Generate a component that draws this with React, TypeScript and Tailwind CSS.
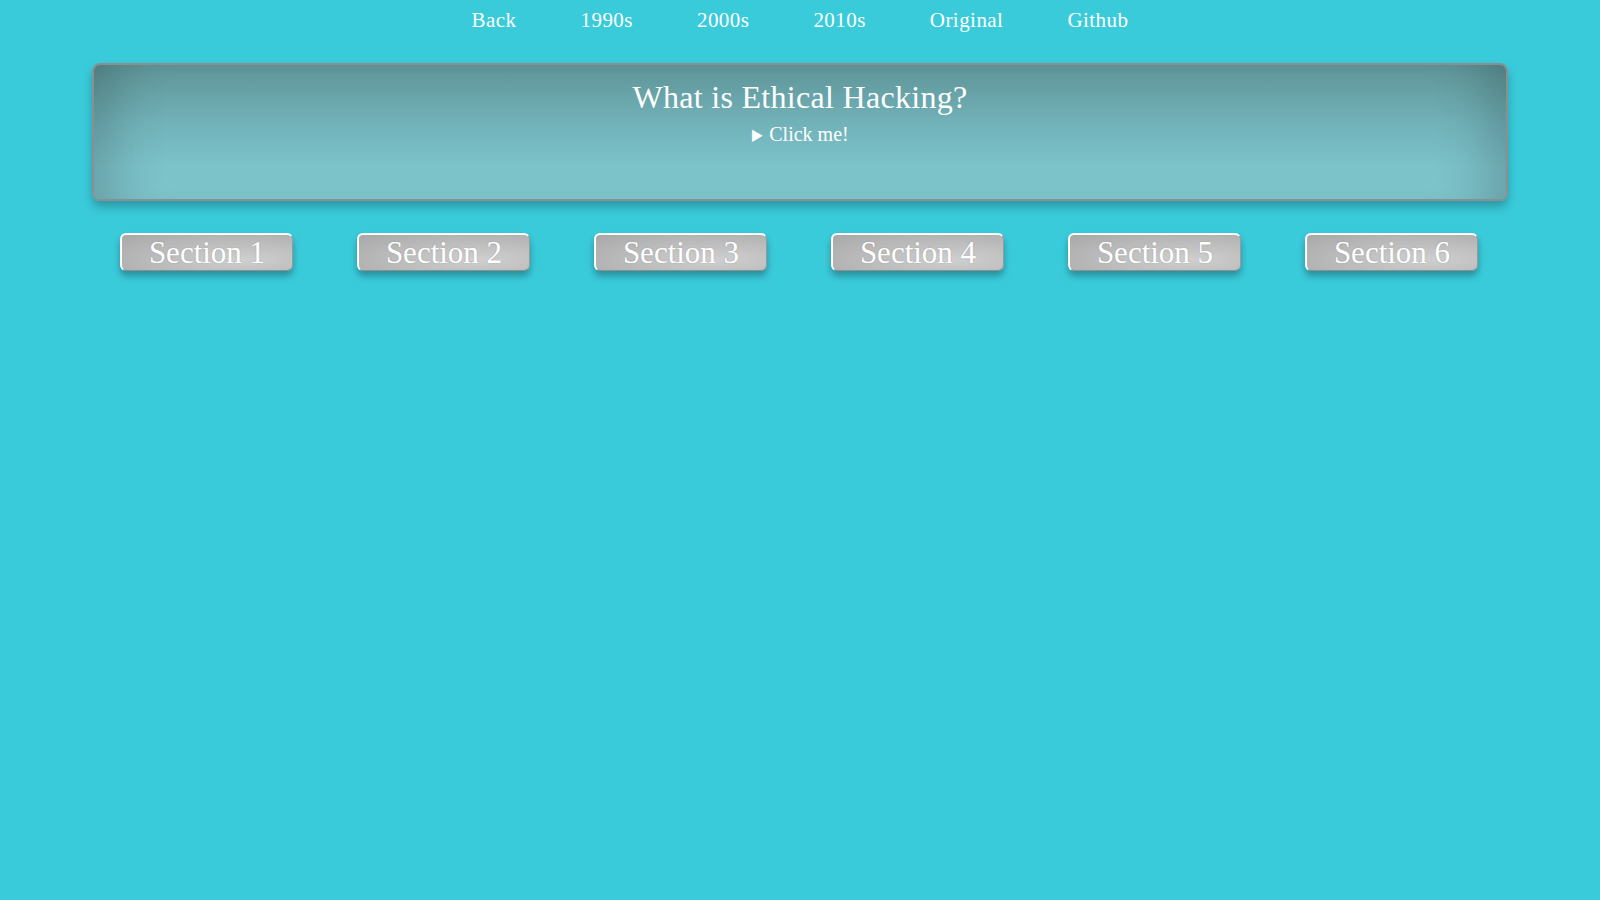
export default function App() {
  const nav = ["Back", "1990s", "2000s", "2010s", "Original", "Github"];
  const sections = ["Section 1", "Section 2", "Section 3", "Section 4", "Section 5", "Section 6"];
  return (
    <div className="min-h-[900px] w-full bg-[#3acbdb] font-['Liberation_Serif',serif] text-white">
      <nav className="flex justify-center gap-16 pt-[6px] text-[21px] leading-[28px] tracking-[0.45px]">
        {nav.map((n) => (
          <a key={n} className="cursor-pointer">{n}</a>
        ))}
      </nav>
      <div className="mx-[92px] mt-[29px] h-[138px] rounded-[8px] border-2 border-[#8a9092] bg-[linear-gradient(to_bottom,#5e9497,#72b3ba_45%,#7cc2c9_75%,#7dc3ca)] shadow-[inset_60px_0_50px_-40px_rgba(0,0,0,0.18),inset_-60px_0_50px_-40px_rgba(0,0,0,0.18),0_6px_10px_rgba(0,0,0,0.25)] pt-[13px] text-center">
        <h2 className="text-[32px] leading-[38px] tracking-[0.3px]">What is Ethical Hacking?</h2>
        <div className="mt-[6px] text-[20px] leading-[24px]">
          <span className="mr-[6px] inline-block text-[16px] align-[1px] scale-x-[0.85]">▶</span>Click me!
        </div>
      </div>
      <div className="ml-[88px] mr-[90px] mt-[32px] grid grid-cols-6 justify-items-center">
        {sections.map((s) => (
          <button
            key={s}
            className="rounded-[6px] border-t-2 border-l-2 border-r border-b border-t-white border-l-white border-r-[#9a9a9a] border-b-[#8e8e8e] bg-[radial-gradient(ellipse_at_70%_70%,#cfcfcf,#a8a8a8)] px-[27px] text-[31px] leading-[35px] text-white shadow-[0_5px_7px_rgba(0,0,0,0.3)] [text-shadow:0_0_2px_rgba(0,0,0,0.15)]"
          >
            {s}
          </button>
        ))}
      </div>
    </div>
  );
}
